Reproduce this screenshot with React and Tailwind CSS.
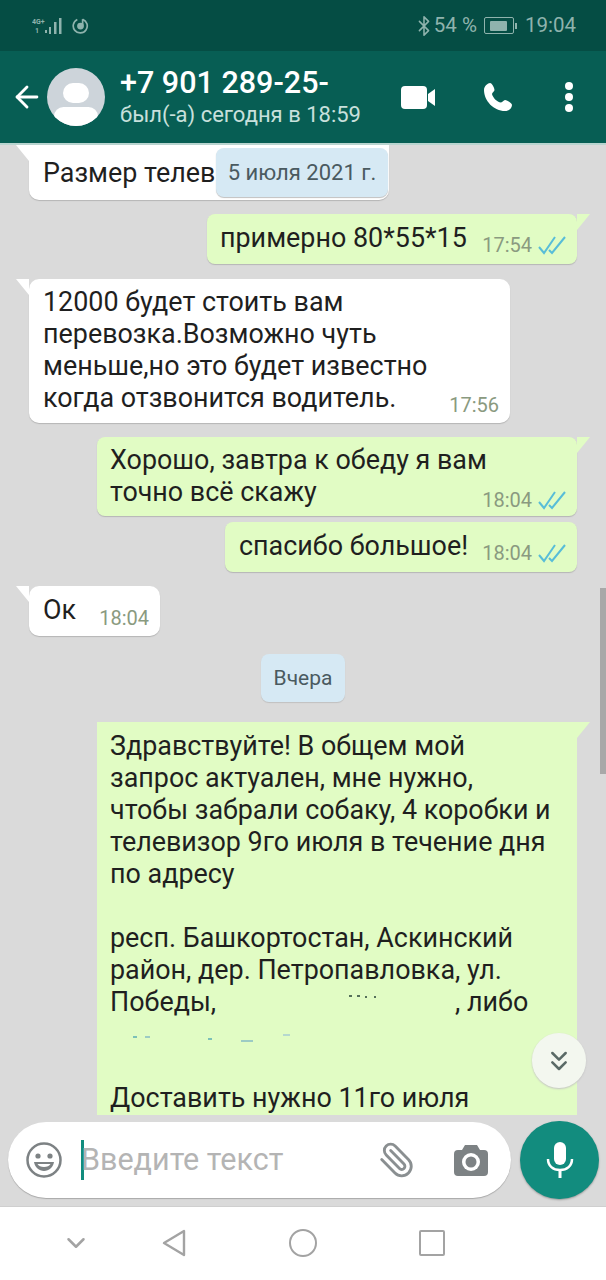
import React from 'react';
import { ArrowLeft, Paperclip, ChevronsDown, ChevronDown, Bluetooth } from 'lucide-react';

const Ticks = () => (
  <svg width="28" height="20" viewBox="0 0 28 20" fill="none" stroke="#58bdd8" strokeWidth="2" className="shrink-0">
    <path d="M1 12l5 6L17 2" />
    <path d="M11 15l3 3L27 2" />
  </svg>
);

const Meta = ({ time, read }) => (
  <span className="flex items-center gap-[6px] text-[20px] leading-none text-[#8a9a80]">
    {time}
    {read && <Ticks />}
  </span>
);

const OutTail = () => (
  <svg width="14" height="16" viewBox="0 0 14 16" className="absolute top-0 left-full fill-[#e1fcc4]">
    <path d="M0 0h13L0 16z" />
  </svg>
);

const InTail = () => (
  <svg width="14" height="16" viewBox="0 0 14 16" className="absolute top-0 right-full fill-white">
    <path d="M14 0H1l13 16z" />
  </svg>
);

function StatusBar() {
  return (
    <div className="h-[51px] shrink-0 bg-[#054d44] flex items-center justify-between pl-[32px] pr-[30px] text-[#8fb3ad]">
      <div className="flex items-center gap-[6px]">
        <svg width="34" height="20" viewBox="0 0 34 20" fill="#8fb3ad">
          <text x="0" y="8" fontSize="7" fontFamily="Roboto, sans-serif" fontWeight="700">4G+</text>
          <text x="3" y="17" fontSize="7" fontFamily="Roboto, sans-serif" fontWeight="700">1</text>
          <rect x="13" y="14" width="2" height="3" />
          <rect x="17" y="11" width="2" height="7" />
          <rect x="22" y="6" width="2.5" height="12" />
          <rect x="27" y="2" width="2.5" height="16" />
        </svg>
        <svg width="17" height="17" viewBox="0 0 16 16" fill="none" stroke="#8fb3ad" strokeWidth="1.6">
          <path d="M10 2.2A6.6 6.6 0 1 1 5 2.4" />
          <circle cx="8" cy="8.5" r="2.4" fill="#8fb3ad" />
          <path d="M10 8V2" />
        </svg>
      </div>
      <div className="flex items-center text-[20.5px] leading-none">
        <Bluetooth size={22} strokeWidth={1.7} className="-mr-[1px]" />
        <span>54 %</span>
        <span className="ml-[7px] flex items-center">
          <span className="w-[30px] h-[17px] border-[1.5px] border-[#8fb3ad] rounded-[2px] flex items-center justify-center">
            <span className="w-[17px] h-[10px] bg-[#8fb3ad] rounded-[1px]" />
          </span>
          <span className="w-[2px] h-[6px] bg-[#8fb3ad] ml-[1px]" />
        </span>
        <span className="ml-[8px]">19:04</span>
      </div>
    </div>
  );
}

function Header() {
  return (
    <div className="h-[94px] shrink-0 bg-[#075e54] flex items-center pl-[10px] border-b-[2px] border-[#b8d4cf] text-white">
      <ArrowLeft size={34} strokeWidth={2} className="shrink-0" />
      <div className="w-[58px] h-[58px] ml-[3px] rounded-full bg-[#cdd4da] overflow-hidden shrink-0 flex flex-col items-center">
        <div className="w-[26px] h-[26px] rounded-full bg-white mt-[15px]" />
        <div className="w-[44px] h-[26px] rounded-full bg-white mt-[4px]" />
      </div>
      <div className="ml-[15px] w-[281px] shrink-0">
        <div className="text-[30.5px] leading-[34px] font-medium">+7 901 289-25-</div>
        <div className="text-[22px] leading-[26px] mt-[2px] text-[#c8e0dc]">был(-а) сегодня в 18:59</div>
      </div>
      <svg width="35" height="23" viewBox="0 0 35 23" fill="white" className="shrink-0">
        <rect x="0" y="0" width="26" height="23" rx="4" />
        <path d="M27 8l7-5v17l-7-5z" />
      </svg>
      <svg width="30" height="30" viewBox="0 0 30 30" fill="white" className="ml-[47px] shrink-0">
        <path d="M7 1c-2 0-6 3-6 7 0 11 10 21 21 21 4 0 7-3 7-6 0-2-5-5-7-5-1.500 0-2.500 2.500-4 2.500C14 20.500 9.500 15 9 12c0-1.500 2.500-2.500 2.500-4C11.500 6 9 1 7 1z" />
      </svg>
      <div className="ml-[52px] flex flex-col gap-[3px] shrink-0">
        <span className="w-[8px] h-[8px] rounded-full bg-white" />
        <span className="w-[8px] h-[8px] rounded-full bg-white" />
        <span className="w-[8px] h-[8px] rounded-full bg-white" />
      </div>
    </div>
  );
}

// leftovers of the redaction in the last message
const specks = [
  { left: 252, top: 273, w: 3, c: 'bg-[#55705a]' },
  { left: 260, top: 273, w: 3, c: 'bg-[#55705a]' },
  { left: 268, top: 274, w: 2, c: 'bg-[#55705a]' },
  { left: 277, top: 274, w: 2, c: 'bg-[#55705a]' },
  { left: 36, top: 314, w: 4, c: 'bg-[#7cc0b8]' },
  { left: 48, top: 314, w: 5, c: 'bg-[#9ccbc4]' },
  { left: 111, top: 316, w: 4, c: 'bg-[#7cc0b8]' },
  { left: 144, top: 318, w: 12, c: 'bg-[#9ccbc4]' },
  { left: 186, top: 312, w: 7, c: 'bg-[#b5d8cf]' },
];

function Chat() {
  return (
    <div className="flex-1 min-h-0 relative overflow-hidden bg-[#dadada] text-[26.9px] leading-[32px] text-[#1f1f1f]">
      <div className="flex flex-col pl-[29px] pr-[29px]">
        {/* cut off by the top edge */}
        <div className="relative self-start w-[360px] h-[55px] bg-white rounded-b-[10px] pl-[14px] pt-[12px] shadow-[0_1px_1px_#b5b5b5]">
          Размер телев
          <InTail />
        </div>

        <div className="relative self-end mt-[14px] h-[50px] w-[370px] bg-[#e1fcc4] rounded-[8px] shadow-[0_1px_1px_#b5b5b5] pl-[13px] pr-[11px] flex items-center justify-between">
          <span className="-mt-[2px]">примерно 80*55*15</span>
          <span className="mt-[11px]"><Meta time="17:54" read /></span>
          <OutTail />
        </div>

        <div className="relative self-start mt-[15px] w-[481px] h-[144px] bg-white rounded-[10px] shadow-[0_1px_1px_#b5b5b5] pl-[14px] pt-[7px]">
          12000 будет стоить вам<br />перевозка.Возможно чуть<br />меньше,но это будет известно<br />когда отзвонится водитель.
          <span className="absolute right-[11px] bottom-[8px]"><Meta time="17:56" /></span>
          <InTail />
        </div>

        <div className="relative self-end mt-[14px] w-[480px] h-[79px] bg-[#e1fcc4] rounded-[8px] shadow-[0_1px_1px_#b5b5b5] pl-[13px] pt-[7px]">
          Хорошо, завтра к обеду я вам<br />точно всё скажу
          <span className="absolute right-[11px] bottom-[6px]"><Meta time="18:04" read /></span>
          <OutTail />
        </div>

        <div className="relative self-end mt-[6px] h-[50px] w-[352px] bg-[#e1fcc4] rounded-[8px] shadow-[0_1px_1px_#b5b5b5] pl-[14px] pr-[11px] flex items-center justify-between">
          <span className="-mt-[3px]">спасибо большое!</span>
          <span className="mt-[11px]"><Meta time="18:04" read /></span>
        </div>

        <div className="relative self-start mt-[14px] h-[50px] w-[131px] bg-white rounded-[10px] shadow-[0_1px_1px_#b5b5b5] pl-[14px] pr-[11px] flex items-center justify-between">
          <span className="-mt-[3px]">Ок</span>
          <span className="mt-[14px]"><Meta time="18:04" /></span>
          <InTail />
        </div>

        <div className="self-center mt-[18px] h-[48px] w-[84px] shrink-0 bg-[#d6e9f4] rounded-[8px] shadow-[0_1px_1px_#c0c0c0] flex items-center justify-center text-[21px] text-[#4a5a60]">
          Вчера
        </div>

        <div className="relative self-end mt-[20px] w-[480px] h-[393px] shrink-0 bg-[#e1fcc4] pl-[13px] pt-[8px]">
          Здравствуйте! В общем мой<br />запрос актуален, мне нужно,<br />чтобы забрали собаку, 4 коробки и<br />телевизор 9го июля в течение дня<br />по адресу<br /><br />
          респ. Башкортостан, Аскинский<br />район, дер. Петропавловка, ул.<br />Победы,<span className="inline-block w-[239px]" />, либо<br /><br /><br />
          Доставить нужно 11го июля
          <OutTail />
          {specks.map((s, i) => (
            <span key={i} className={`absolute h-[2px] ${s.c}`} style={{ left: s.left, top: s.top, width: s.w }} />
          ))}
        </div>
      </div>

      {/* date chip and scroll controls float over the messages */}
      <div className="absolute top-[3px] left-[216px] w-[172px] h-[49px] bg-[#d6e9f4] rounded-[8px] flex items-center justify-center text-[22px] text-[#4a5a60] shadow-[0_1px_1px_#c0c0c0]">
        5 июля 2021 г.
      </div>
      <div className="absolute right-0 top-[443px] w-[6px] h-[186px] bg-[#a8a8a8]" />
      <div className="absolute top-[888px] left-[532px] w-[54px] h-[55px] rounded-full bg-[#f3f7ef] shadow-[0_1px_2px_#c4c4c4] flex items-center justify-center">
        <ChevronsDown size={32} strokeWidth={1.9} className="text-[#5a6a66]" />
      </div>
    </div>
  );
}

function InputBar() {
  return (
    <div className="h-[92px] shrink-0 bg-[#dadada] flex pl-[8px] pt-[7px] gap-[9px] border-b border-[#cfcfcf]">
      <div className="w-[503px] h-[76px] bg-white rounded-full shadow-[0_1px_1px_#a8a8a8] flex items-center pl-[18px] pr-[23px]">
        <svg width="36" height="36" viewBox="0 0 36 36" className="shrink-0">
          <circle cx="18" cy="18" r="16.500" fill="none" stroke="#7d8284" strokeWidth="2.500" />
          <circle cx="12" cy="14" r="2.600" fill="#7d8284" />
          <circle cx="24" cy="14" r="2.600" fill="#7d8284" />
          <path d="M8 20h20c-1 5.500-5 9-10 9s-9-3.500-10-9z" fill="#7d8284" />
          <path d="M11.500 22h13c-1 2-3.500 3-6.500 3s-5.500-1-6.500-3z" fill="white" />
        </svg>
        <span className="w-[3px] h-[40px] bg-[#128c7e] ml-[19px] shrink-0" />
        <span className="text-[30.5px] text-[#b4b4b4] flex-1 -ml-[3px]">Введите текст</span>
        <Paperclip size={38} strokeWidth={1.8} className="text-[#8a8f91] shrink-0 -scale-x-100" />
        <svg width="34" height="31" viewBox="0 0 34 31" className="ml-[38px] shrink-0">
          <path fill="#7d8284" d="M11 0h12l3 5h4a4 4 0 0 1 4 4v18a4 4 0 0 1-4 4H4a4 4 0 0 1-4-4V9a4 4 0 0 1 4-4h4z" />
          <circle cx="17" cy="17" r="9" fill="white" />
          <circle cx="17" cy="17" r="5.500" fill="#7d8284" />
        </svg>
      </div>
      <div className="w-[79px] h-[78px] -mt-[1px] rounded-full bg-[#128c7e] shadow-[0_1px_2px_#9a9a9a] flex items-center justify-center">
        <svg width="28" height="36" viewBox="0 0 28 36" fill="white">
          <rect x="8" y="0" width="12" height="23" rx="6" />
          <path d="M2 17c0 7 5 11 12 11s12-4 12-11" fill="none" stroke="white" strokeWidth="2.500" />
          <rect x="12.500" y="27" width="3" height="9" />
        </svg>
      </div>
    </div>
  );
}

function NavBar() {
  return (
    <div className="h-[73px] shrink-0 bg-white flex items-center pb-[1px]">
      <ChevronDown size={30} strokeWidth={2} className="text-[#a3a3a3] ml-[61px]" />
      <svg width="26" height="30" viewBox="0 0 26 30" fill="none" stroke="#a3a3a3" strokeWidth="2.400" className="ml-[70px]">
        <path d="M23 3v24L3 15z" strokeLinejoin="round" />
      </svg>
      <span className="w-[28px] h-[28px] rounded-full border-[2.4px] border-[#a3a3a3] ml-[102px]" />
      <span className="w-[26px] h-[26px] rounded-[2px] border-[2.4px] border-[#a3a3a3] ml-[102px]" />
    </div>
  );
}

export default function App() {
  return (
    <div className="w-[606px] h-[1280px] overflow-hidden flex flex-col font-['Roboto',sans-serif]">
      <StatusBar />
      <Header />
      <Chat />
      <InputBar />
      <NavBar />
    </div>
  );
}
